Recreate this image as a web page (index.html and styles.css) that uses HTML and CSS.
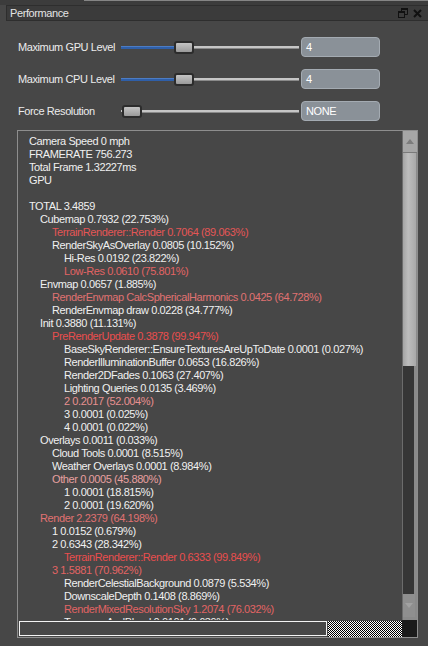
FILE: index.html
```html
<!DOCTYPE html>
<html>
<head>
<meta charset="utf-8">
<link rel="stylesheet" href="styles.css">
</head>
<body>
<div class="topstrip"><div class="tabline"></div></div>
<div class="titlebar">
  <span class="title">Performance</span>
  <span class="icons">
    <svg class="ic" width="10" height="10" viewBox="0 0 10 10">
      <rect x="3" y="0" width="7" height="2" fill="#111"/>
      <path d="M3.5 3V0.5H9.5V6.5H7" fill="none" stroke="#111" stroke-width="1"/>
      <rect x="0" y="3" width="7" height="2" fill="#111"/>
      <rect x="0.5" y="3.5" width="6" height="6" fill="none" stroke="#111" stroke-width="1"/>
    </svg>
    <svg class="ic" width="9" height="9" viewBox="0 0 9 9">
      <path d="M1 1L8 8M8 1L1 8" stroke="#111" stroke-width="2"/>
    </svg>
  </span>
</div>
<div class="controls">
  <div class="row">
    <span class="label">Maximum GPU Level</span>
    <div class="slider"><div class="fill" style="width:53px"></div><div class="handle"></div><div class="rest"></div></div>
    <div class="field">4</div>
  </div>
  <div class="row">
    <span class="label">Maximum CPU Level</span>
    <div class="slider"><div class="fill" style="width:53px"></div><div class="handle"></div><div class="rest"></div></div>
    <div class="field">4</div>
  </div>
  <div class="row">
    <span class="label">Force Resolution</span>
    <div class="slider"><div class="fill none" style="width:1px"></div><div class="handle"></div><div class="rest"></div></div>
    <div class="field">NONE</div>
  </div>
</div>
<div class="log">
  <div class="content">
    <div>Camera Speed 0 mph</div>
    <div>FRAMERATE 756.273</div>
    <div>Total Frame 1.32227ms</div>
    <div>GPU</div>
    <div>&nbsp;</div>
    <div>TOTAL 3.4859</div>
    <div class="l1">Cubemap 0.7932 (22.753%)</div>
    <div class="l2 r1">TerrainRenderer::Render 0.7064 (89.063%)</div>
    <div class="l2">RenderSkyAsOverlay 0.0805 (10.152%)</div>
    <div class="l3">Hi-Res 0.0192 (23.822%)</div>
    <div class="l3 r2">Low-Res 0.0610 (75.801%)</div>
    <div class="l1">Envmap 0.0657 (1.885%)</div>
    <div class="l2 r3">RenderEnvmap CalcSphericalHarmonics 0.0425 (64.728%)</div>
    <div class="l2">RenderEnvmap draw 0.0228 (34.777%)</div>
    <div class="l1">Init 0.3880 (11.131%)</div>
    <div class="l2 r0">PreRenderUpdate 0.3878 (99.947%)</div>
    <div class="l3">BaseSkyRenderer::EnsureTexturesAreUpToDate 0.0001 (0.027%)</div>
    <div class="l3">RenderIlluminationBuffer 0.0653 (16.826%)</div>
    <div class="l3">Render2DFades 0.1063 (27.407%)</div>
    <div class="l3">Lighting Queries 0.0135 (3.469%)</div>
    <div class="l3 r4">2 0.2017 (52.004%)</div>
    <div class="l3">3 0.0001 (0.025%)</div>
    <div class="l3">4 0.0001 (0.022%)</div>
    <div class="l1">Overlays 0.0011 (0.033%)</div>
    <div class="l2">Cloud Tools 0.0001 (8.515%)</div>
    <div class="l2">Weather Overlays 0.0001 (8.984%)</div>
    <div class="l2 r5">Other 0.0005 (45.880%)</div>
    <div class="l3">1 0.0001 (18.815%)</div>
    <div class="l3">2 0.0001 (19.620%)</div>
    <div class="l1 r3">Render 2.2379 (64.198%)</div>
    <div class="l2">1 0.0152 (0.679%)</div>
    <div class="l2">2 0.6343 (28.342%)</div>
    <div class="l3 r0">TerrainRenderer::Render 0.6333 (99.849%)</div>
    <div class="l2 r2">3 1.5881 (70.962%)</div>
    <div class="l3">RenderCelestialBackground 0.0879 (5.534%)</div>
    <div class="l3">DownscaleDepth 0.1408 (8.869%)</div>
    <div class="l3 r2">RenderMixedResolutionSky 1.2074 (76.032%)</div>
    <div class="l3">TonemapAndBlend 0.0101 (0.639%)</div>
  </div>
  <div class="vscroll">
    <div class="btn up"><span class="tri-up"></span></div>
    <div class="thumb"></div>
    <div class="track"></div>
    <div class="btn down"><span class="tri-down"></span></div>
  </div>
  <div class="hscroll">
    <div class="hthumb"></div>
    <div class="checker"></div>
  </div>
  <div class="corner"></div>
</div>
</body>
</html>
```

FILE: styles.css
```css
* { box-sizing: border-box; margin: 0; padding: 0; }
html, body { width: 428px; height: 646px; overflow: hidden; }
body {
  background: #474747;
  font-family: "Liberation Sans", Arial, sans-serif;
  font-size: 11px;
  letter-spacing: -0.4px;
  color: #eeeeee;
}
.topstrip { height: 5px; background: #3c3c3c; }
.tabline { margin-left: 84px; height: 1px; background: #858585; }
.titlebar {
  height: 16px;
  margin-left: 6px;
  background: #3b3b3b;
  border: 1px solid #2e2e2e;
  border-right: none;
  display: flex;
  align-items: center;
  justify-content: space-between;
  padding-left: 3px;
  padding-right: 6px;
}
.title { color: #e4e4e4; line-height: 14px; }
.icons { display: flex; align-items: center; gap: 5px; }
.ic { display: block; }

.controls {
  padding: 16px 0 0 18px;
  display: flex;
  flex-direction: column;
  gap: 12px;
}
.row { display: flex; align-items: center; height: 20px; }
.label { width: 103px; color: #ececec; }
.slider { width: 178px; display: flex; align-items: center; height: 20px; }
.fill {
  height: 3px;
  background: #2f5fa8;
  border-top: 1px solid #4c7cc4;
}
.fill.none { background: #c6c6c6; border: none; height: 2px; }
.handle {
  width: 20px;
  height: 13px;
  border: 2px solid #2c2c2c;
  border-radius: 3px;
  background: linear-gradient(#c4c4c4, #9a9a9a);
  flex: none;
}
.rest { flex: 1; height: 2px; background: #c6c6c6; border-bottom: 1px solid #8a8a8a; height: 3px; }
.field {
  margin-left: 2px;
  width: 79px;
  height: 20px;
  background: #8a9198;
  border: 1px solid #a4abb2;
  border-radius: 4px;
  color: #ffffff;
  padding-left: 4px;
  line-height: 18px;
}

.log {
  margin: 9px 0 0 17px;
  width: 401px;
  height: 508px;
  border: 1px solid #8e8e8e;
  display: grid;
  grid-template-columns: 384px 15px;
  grid-template-rows: 489px 17px;
}
.content {
  overflow: hidden;
  padding: 4px 0 0 11px;
  line-height: 13px;
  white-space: nowrap;
  color: #f0f0f0;
}
.l1 { padding-left: 11px; }
.l2 { padding-left: 23px; }
.l3 { padding-left: 35px; }
.r0 { color: #ea4e4e; }
.r1 { color: #e45656; }
.r2 { color: #e26464; }
.r3 { color: #e07272; }
.r4 { color: #e89090; }
.r5 { color: #e8a0a0; }

.vscroll {
  display: flex;
  flex-direction: column;
  background: #8a8a8a;
  border-left: 1px solid #6c6c6c;
}
.btn { display: flex; align-items: center; justify-content: center; }
.up { height: 22px; background: #a6a6a6; border-bottom: 1px solid #7a7a7a; }
.down { height: 23px; background: #8f8f8f; margin: 0 2px 3px 0; }
.thumb {
  height: 213px;
  background: linear-gradient(90deg, #a4a4a4, #bdbdbd 40%, #a8a8a8);
  border-right: 1px solid #8a8a8a;
}
.track { flex: 1; background: #363636; margin-right: 3px; }
.tri-up {
  width: 0; height: 0;
  border-left: 4px solid transparent;
  border-right: 4px solid transparent;
  border-bottom: 5px solid #7c7c7c;
}
.tri-down {
  width: 0; height: 0;
  border-left: 4px solid transparent;
  border-right: 4px solid transparent;
  border-top: 5px solid #a2a2a2;
}
.hscroll { display: flex; padding-top: 1px; }
.hthumb {
  margin-left: 1px;
  width: 308px;
  height: 15px;
  border: 1px solid #f4f4f4;
  background: #474747;
}
.checker {
  flex: 1;
  margin-left: 1px;
  height: 16px;
  background-color: #fff;
  background-image: repeating-conic-gradient(#000 0 25%, #fff 0 50%);
  background-size: 2px 2px;
}
.corner { background: #1b1b1b; }
```
